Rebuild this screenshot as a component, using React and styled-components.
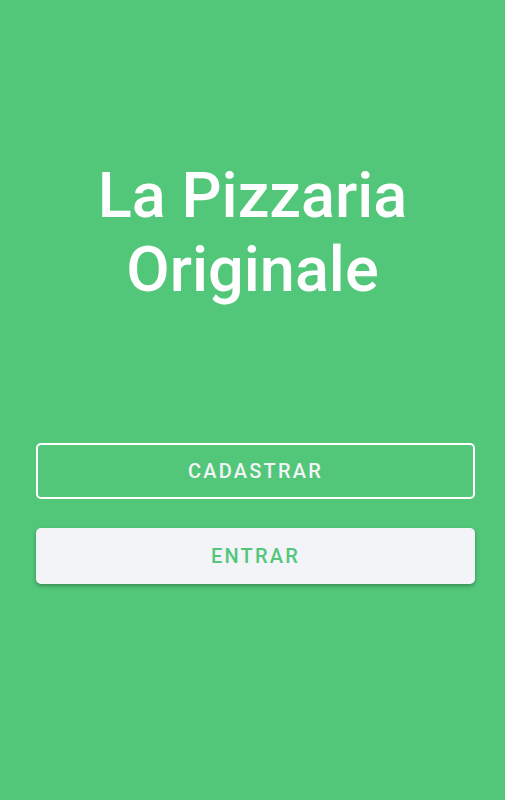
import React from "react";
import styled, { createGlobalStyle } from "styled-components";

const GlobalStyle = createGlobalStyle`
  html, body {
    margin: 0;
    padding: 0;
    background: #52c77a;
  }
  * {
    box-sizing: border-box;
  }
`;

const Screen = styled.div`
  display: flex;
  flex-direction: column;
  width: 100%;
  min-height: 800px;
  background: #52c77a;
  padding-top: 159px;
  font-family: Roboto, "Liberation Sans", sans-serif;
`;

const Title = styled.h1`
  margin: 0;
  color: #fff;
  font-size: 63px;
  font-weight: 500;
  line-height: 74px;
  text-align: center;
`;

const Actions = styled.div`
  display: flex;
  flex-direction: column;
  gap: 29px;
  margin-top: 136px;
  padding: 0 30px 0 36px;
`;

const Button = styled.button`
  height: 56px;
  width: 100%;
  border-radius: 5px;
  font-family: Roboto, "Liberation Sans", sans-serif;
  font-size: 20px;
  font-weight: 500;
  letter-spacing: 2.2px;
  text-transform: uppercase;
  cursor: pointer;
  border: ${(p) => (p.$outline ? "2px solid #fff" : "none")};
  background: ${(p) => (p.$outline ? "transparent" : "#f2f4f8")};
  color: ${(p) => (p.$outline ? "#f2f4f8" : "#52c77a")};
  box-shadow: ${(p) => (p.$outline ? "none" : "0 2px 4px rgba(0, 0, 0, 0.3)")};
`;

export default function App() {
  return (
    <>
      <GlobalStyle />
      <Screen>
        <Title>
          La Pizzaria
          <br />
          Originale
        </Title>
        <Actions>
          <Button $outline>Cadastrar</Button>
          <Button>Entrar</Button>
        </Actions>
      </Screen>
    </>
  );
}
